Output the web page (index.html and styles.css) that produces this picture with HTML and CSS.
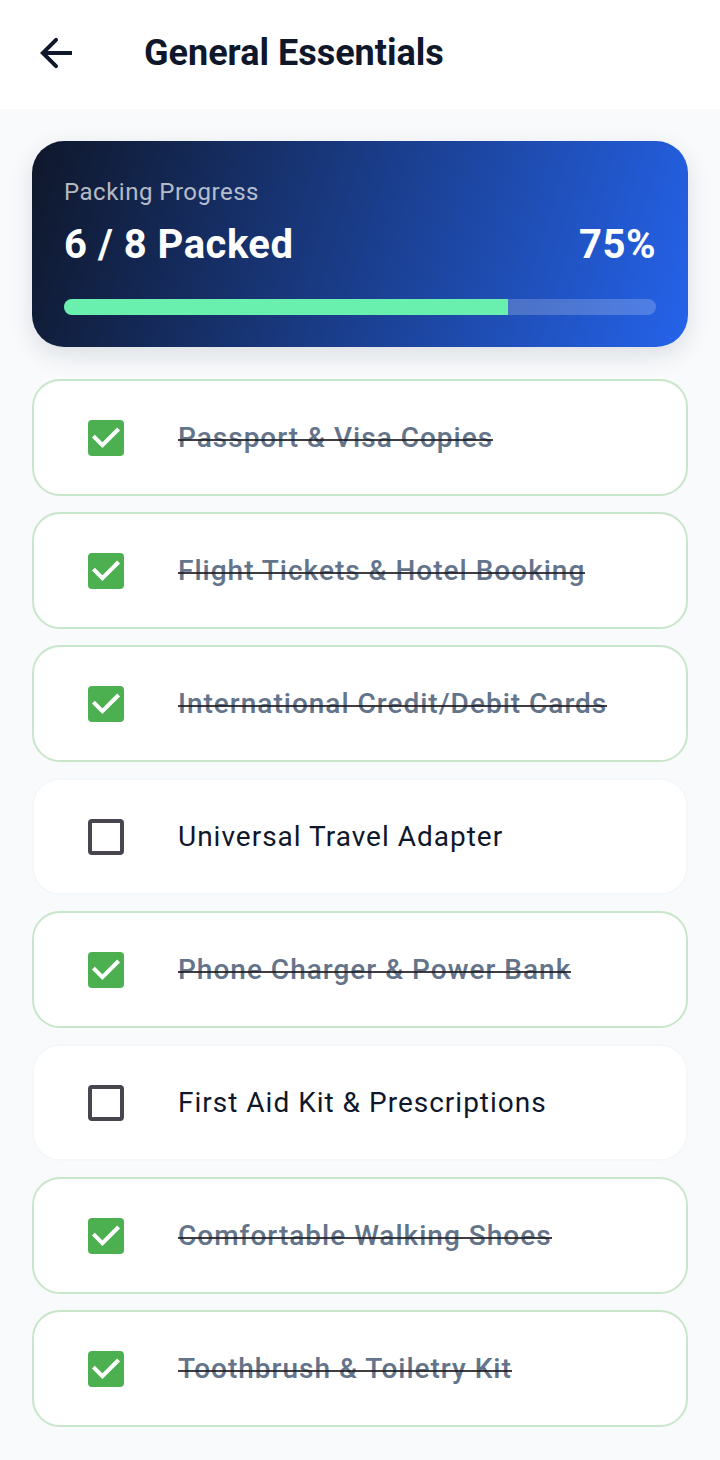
FILE: index.html
```html
<!DOCTYPE html>
<html lang="en">
<head>
<meta charset="utf-8">
<meta name="viewport" content="width=device-width, initial-scale=1">
<title>General Essentials</title>
<link rel="stylesheet" href="styles.css">
</head>
<body>
<header class="app-bar">
  <button class="back" type="button" aria-label="Back">
    <svg class="back-icon" viewBox="0 0 24 24" aria-hidden="true"><path d="M20 11H7.83l4.88-4.88c.39-.39.39-1.03 0-1.42s-1.02-.39-1.41 0L4 12l7.3 7.3c.39.39 1.02.39 1.41 0s.39-1.02 0-1.41L7.83 13H20z"/></svg>
  </button>
  <h1 class="title">General Essentials</h1>
</header>
<main class="content">
  <section class="summary">
    <p class="summary-label" id="progress-label">Packing Progress</p>
    <div class="summary-row">
      <span>6 / 8 Packed</span>
      <span>75%</span>
    </div>
    <progress class="bar" value="6" max="8" aria-labelledby="progress-label"></progress>
  </section>
  <ul class="items">
    <li><label class="item"><span class="check"><input type="checkbox" checked><svg viewBox="0 0 36 36" aria-hidden="true"><path d="M5.4 16.2l9 9 16.2-16.2"/></svg></span><span class="name">Passport &amp; Visa Copies</span></label></li>
    <li><label class="item"><span class="check"><input type="checkbox" checked><svg viewBox="0 0 36 36" aria-hidden="true"><path d="M5.4 16.2l9 9 16.2-16.2"/></svg></span><span class="name">Flight Tickets &amp; Hotel Booking</span></label></li>
    <li><label class="item"><span class="check"><input type="checkbox" checked><svg viewBox="0 0 36 36" aria-hidden="true"><path d="M5.4 16.2l9 9 16.2-16.2"/></svg></span><span class="name">International Credit/Debit Cards</span></label></li>
    <li><label class="item"><span class="check"><input type="checkbox"><svg viewBox="0 0 36 36" aria-hidden="true"><path d="M5.4 16.2l9 9 16.2-16.2"/></svg></span><span class="name">Universal Travel Adapter</span></label></li>
    <li><label class="item"><span class="check"><input type="checkbox" checked><svg viewBox="0 0 36 36" aria-hidden="true"><path d="M5.4 16.2l9 9 16.2-16.2"/></svg></span><span class="name">Phone Charger &amp; Power Bank</span></label></li>
    <li><label class="item"><span class="check"><input type="checkbox"><svg viewBox="0 0 36 36" aria-hidden="true"><path d="M5.4 16.2l9 9 16.2-16.2"/></svg></span><span class="name">First Aid Kit &amp; Prescriptions</span></label></li>
    <li><label class="item"><span class="check"><input type="checkbox" checked><svg viewBox="0 0 36 36" aria-hidden="true"><path d="M5.4 16.2l9 9 16.2-16.2"/></svg></span><span class="name">Comfortable Walking Shoes</span></label></li>
    <li><label class="item"><span class="check"><input type="checkbox" checked><svg viewBox="0 0 36 36" aria-hidden="true"><path d="M5.4 16.2l9 9 16.2-16.2"/></svg></span><span class="name">Toothbrush &amp; Toiletry Kit</span></label></li>
  </ul>
</main>
</body>
</html>
```
FILE: styles.css
```css
* {
  box-sizing: border-box;
}

body {
  margin: 0;
  background: #f8fafc;
  color: #0f172a;
  font-family: Roboto, "Liberation Sans", sans-serif;
}

.app-bar {
  display: flex;
  align-items: center;
  gap: 64px;
  padding: 28px 32px 31px;
  background: #fff;
}

.back {
  display: flex;
  padding: 0;
  border: 0;
  background: none;
  color: inherit;
  cursor: pointer;
}

.back-icon {
  width: 48px;
  height: 48px;
  fill: currentColor;
}

.title {
  margin: 0;
  font-size: 36px;
  font-weight: 700;
  line-height: 50px;
}

.content {
  display: flex;
  flex-direction: column;
  gap: 32px;
  padding: 32px;
}

.summary {
  display: flex;
  flex-direction: column;
  padding: 32px;
  border-radius: 32px;
  background: linear-gradient(107deg, #0f172a, #2563eb);
  box-shadow: 0 8px 24px rgba(15, 23, 42, 0.12);
  color: #fff;
}

.summary-label {
  margin: 0;
  color: rgba(255, 255, 255, 0.7);
  font-size: 24px;
  line-height: 38px;
  letter-spacing: 0.5px;
}

.summary-row {
  display: flex;
  justify-content: space-between;
  margin-bottom: 20px;
  font-size: 40px;
  font-weight: 700;
  line-height: 68px;
  letter-spacing: 0.5px;
}

.bar {
  appearance: none;
  display: block;
  width: 100%;
  height: 16px;
  border: 0;
  border-radius: 8px;
  overflow: hidden;
  background: rgba(255, 255, 255, 0.2);
}

.bar::-webkit-progress-bar {
  background: transparent;
}

.bar::-webkit-progress-value {
  background: #69f0ae;
}

.items {
  display: flex;
  flex-direction: column;
  gap: 16px;
  margin: 0;
  padding: 0;
  list-style: none;
}

.item {
  display: flex;
  align-items: center;
  gap: 54px;
  min-height: 117px;
  padding: 16px 54px;
  border: 2px solid #f5f8fb;
  border-radius: 28px;
  background: #fff;
  font-size: 28px;
  line-height: 40px;
  letter-spacing: 1px;
  cursor: pointer;
}

.item:has(input:checked) {
  border-color: #c8e6c9;
}

.check {
  display: grid;
  flex: none;
}

.check > * {
  grid-area: 1 / 1;
}

.check input {
  appearance: none;
  width: 36px;
  height: 36px;
  margin: 0;
  border: 4px solid #49454f;
  border-radius: 4px;
}

.check input:checked {
  border-color: #4caf50;
  background: #4caf50;
}

.check svg {
  width: 36px;
  height: 36px;
  fill: none;
  stroke: #fff;
  stroke-width: 4;
  visibility: hidden;
  pointer-events: none;
}

.check input:checked + svg {
  visibility: visible;
}

.item:has(input:checked) .name {
  position: relative;
  color: #64748b;
  font-weight: 500;
}

.item:has(input:checked) .name::after {
  content: "";
  position: absolute;
  left: 0;
  right: 0;
  top: 21px;
  height: 2px;
  background: rgba(29, 27, 32, 0.85);
}
```
